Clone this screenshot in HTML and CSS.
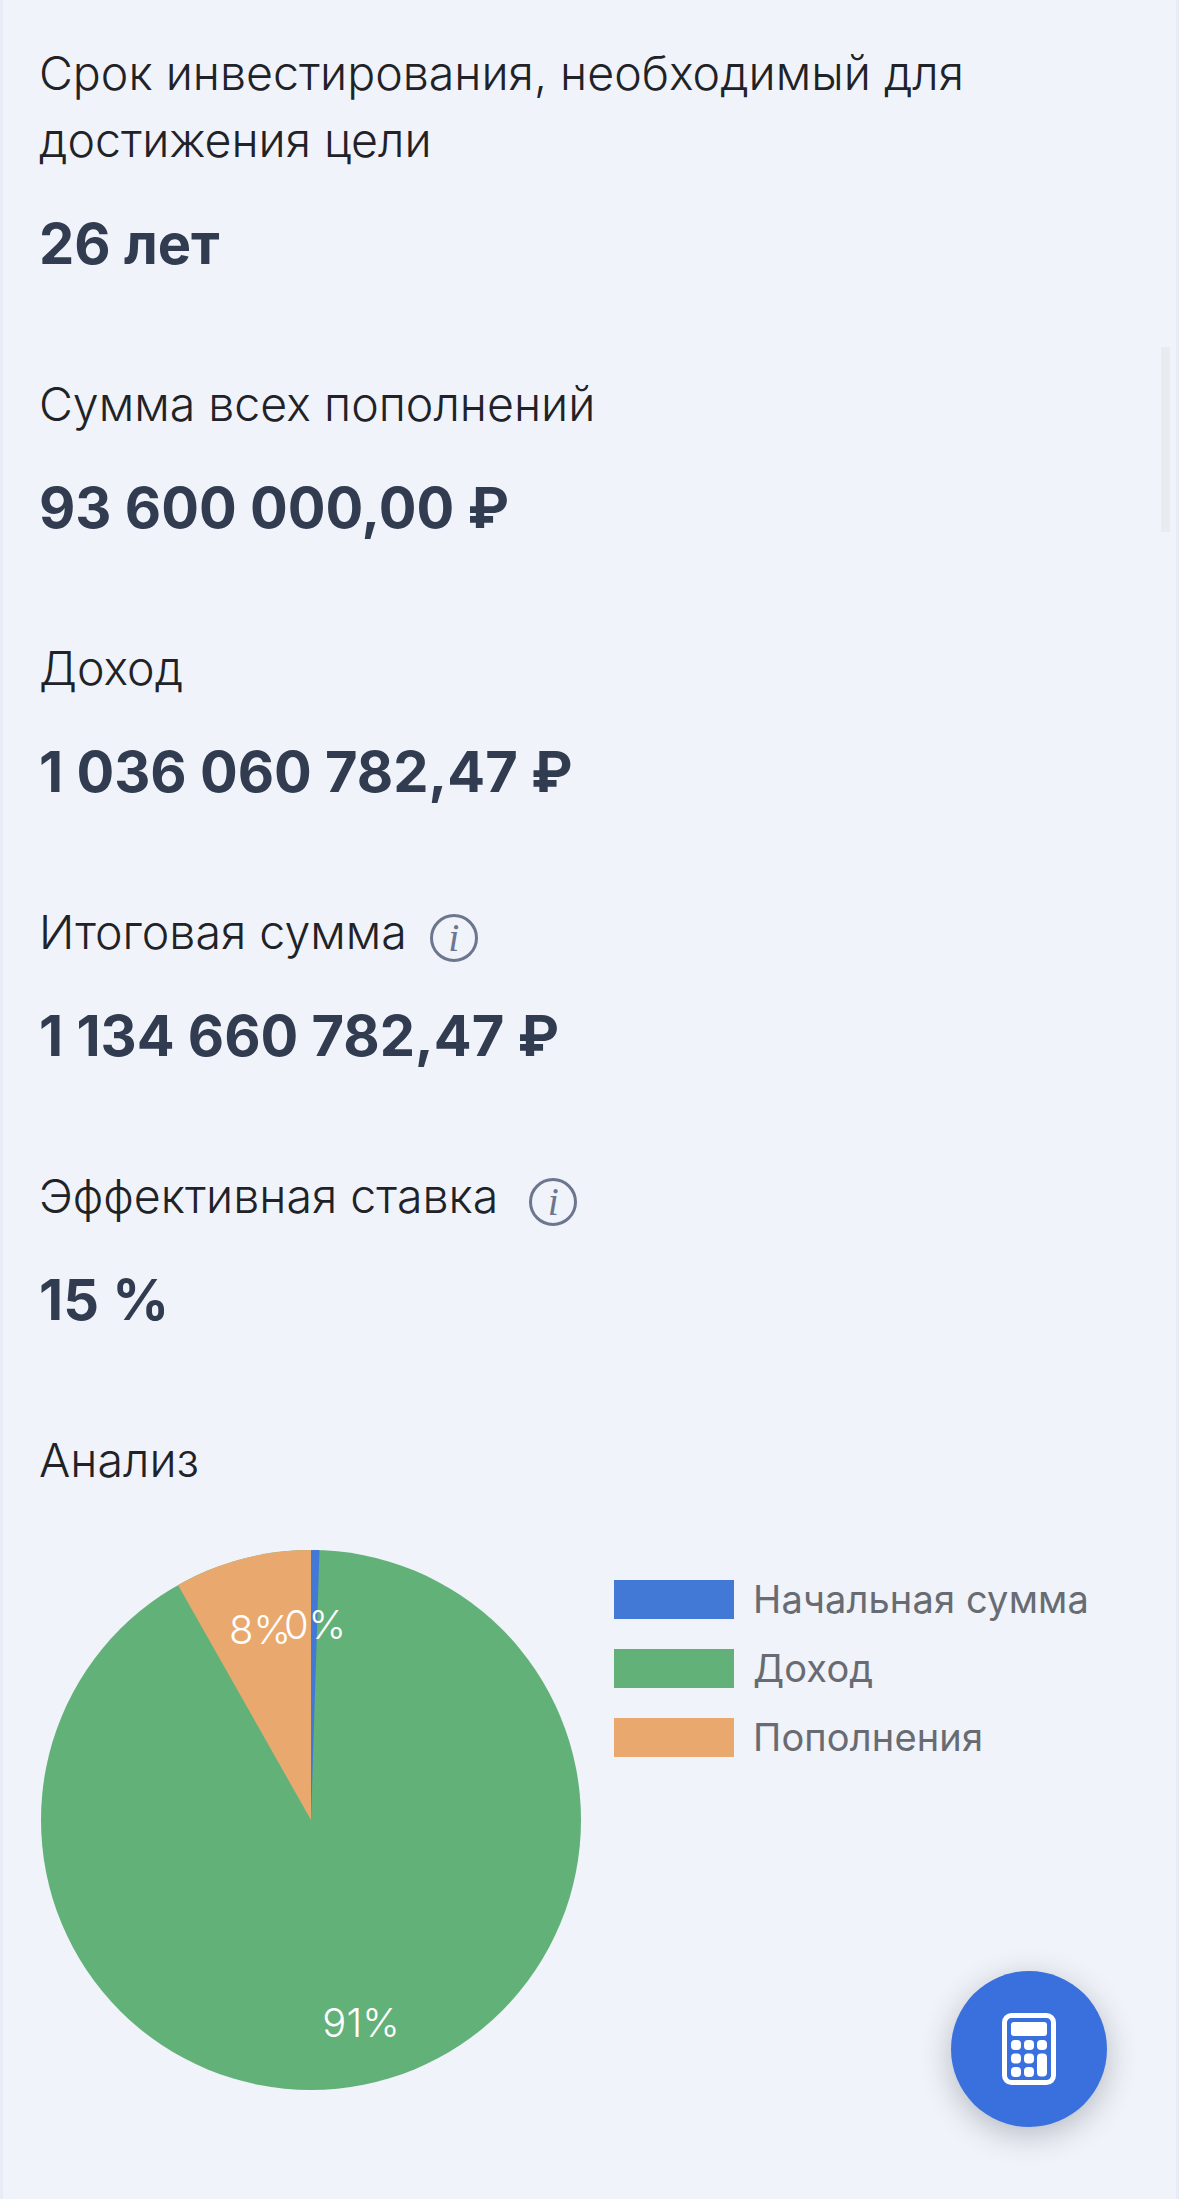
FILE: index.html
```html
<!DOCTYPE html>
<html lang="ru">
<head>
    <meta charset="UTF-8">
    <meta name="viewport" content="width=device-width, initial-scale=1.0">
    <title>Результаты расчёта</title>
    <link rel="stylesheet" href="styles.css">
</head>
<body>
    <div class="container">
        <div class="result-item">
            <div class="result-label">Срок инвестирования, необходимый для достижения цели</div>
            <div class="result-value">26 лет</div>
        </div>
        <div class="result-item">
            <div class="result-label">Сумма всех пополнений</div>
            <div class="result-value">93 600 000,00 ₽</div>
        </div>
        <div class="result-item">
            <div class="result-label">Доход</div>
            <div class="result-value">1 036 060 782,47 ₽</div>
        </div>
        <div class="result-item">
            <div class="result-label">Итоговая сумма <span class="info-icon">i</span></div>
            <div class="result-value">1 134 660 782,47 ₽</div>
        </div>
        <div class="result-item">
            <div class="result-label">Эффективная ставка <span class="info-icon info-icon-wide">i</span></div>
            <div class="result-value">15 %</div>
        </div>

        <!-- Pie chart and legend -->
        <div class="result-label">Анализ</div>
        <div class="chart-row">
            <svg class="pie-chart" width="542" height="542" viewBox="0 0 542 542">
                <circle cx="271" cy="271" r="270" fill="#62b178"/>
                <path d="M271 271 L271 1 A270 270 0 0 1 279.5 1.1 Z" fill="#4379d6"/>
                <path d="M271 271 L271 1 A270 270 0 0 0 138 36 Z" fill="#e9a96e"/>
                <text class="pie-label" x="220" y="95" text-anchor="middle">8%</text>
                <text class="pie-label" x="275" y="90" text-anchor="middle">0%</text>
                <text class="pie-label" x="321" y="488" text-anchor="middle">91%</text>
            </svg>
            <div class="legend">
                <div class="legend-item"><span class="legend-color color-blue"></span><span class="legend-text">Начальная сумма</span></div>
                <div class="legend-item"><span class="legend-color color-green"></span><span class="legend-text">Доход</span></div>
                <div class="legend-item"><span class="legend-color color-orange"></span><span class="legend-text">Пополнения</span></div>
            </div>
        </div>

        <div class="scroll-thumb"></div>
        <button type="button" class="calc-button" aria-label="Калькулятор">
            <svg width="54" height="72" viewBox="0 0 54 72">
                <rect x="2.5" y="2.5" width="49" height="67" rx="7" fill="none" stroke="#fff" stroke-width="5"/>
                <rect x="9" y="9" width="36" height="14" rx="3" fill="#fff"/>
                <rect x="9" y="27" width="10" height="10" rx="4" fill="#fff"/>
                <rect x="22" y="27" width="10" height="10" rx="4" fill="#fff"/>
                <rect x="35" y="27" width="10" height="10" rx="4" fill="#fff"/>
                <rect x="9" y="40.500" width="10" height="10" rx="4" fill="#fff"/>
                <rect x="22" y="40.500" width="10" height="10" rx="4" fill="#fff"/>
                <rect x="35" y="40.500" width="10" height="23" rx="4" fill="#fff"/>
                <rect x="9" y="54" width="10" height="10" rx="4" fill="#fff"/>
                <rect x="22" y="54" width="10" height="10" rx="4" fill="#fff"/>
            </svg>
        </button>
    </div>
</body>
</html>
```
FILE: styles.css
```css
body, html {
    margin: 0;
    padding: 0;
    height: 100%;
}
body {
    background-color: #f0f3f9;
    font-family: "Inter", "Roboto", sans-serif;
    overflow: hidden;
}
.container {
    position: relative;
    box-sizing: border-box;
    height: 2199px;
    padding: 40px 40px 0;
    border-left: 3px solid #e7ecf7;
    border-right: 3px solid #e7ecf7;
}

/* Results list */
.result-item {
    margin-bottom: 89px;
}
.result-label {
    max-width: 1000px;
    margin-left: -4px;
    font-size: 46.500px;
    font-weight: 300;
    line-height: 67px;
    color: #1f2328;
}
.result-value {
    margin-top: 32px;
    margin-left: -4px;
    font-size: 56px;
    font-weight: 700;
    line-height: 76px;
    color: #323c50;
}
.info-icon {
    display: inline-block;
    box-sizing: border-box;
    width: 48px;
    height: 48px;
    margin-left: 10px;
    border: 3px solid #6c768f;
    border-radius: 50%;
    font-family: "Liberation Serif", serif;
    font-size: 40px;
    font-style: italic;
    font-weight: 400;
    line-height: 42px;
    text-align: center;
    color: #6c768f;
    vertical-align: -2px;
}
.info-icon-wide {
    margin-left: 18px;
}

/* Chart */
.chart-row {
    display: flex;
    align-items: flex-start;
    margin-top: 55px;
}
.pie-chart {
    flex: none;
    margin-left: -3px;
}
.pie-label {
    font-family: "Inter", sans-serif;
    font-size: 40px;
    font-weight: 300;
    fill: #fff;
}
.legend {
    margin-left: 32px;
    padding-top: 31px;
}
.legend-item {
    display: flex;
    align-items: center;
    height: 39px;
    margin-bottom: 30px;
    font-size: 38px;
    font-weight: 400;
    letter-spacing: 0.15px;
    color: #686c72;
    white-space: nowrap;
}
.legend-text {
    margin-top: -2px;
    margin-left: -1px;
}
.legend-color {
    width: 120px;
    height: 39px;
    margin-right: 20px;
}
.color-blue {
    background-color: #4379d6;
}
.color-green {
    background-color: #62b178;
}
.color-orange {
    background-color: #e9a96e;
}

/* Overlays */
.scroll-thumb {
    position: absolute;
    top: 347px;
    right: 6px;
    width: 9px;
    height: 185px;
    background-color: #e8ebf0;
}
.calc-button {
    position: absolute;
    top: 1971px;
    left: 948px;
    display: flex;
    align-items: center;
    justify-content: center;
    width: 156px;
    height: 156px;
    padding: 0;
    border: none;
    border-radius: 50%;
    background-color: #3a70de;
    box-shadow: 0 8px 30px rgba(50, 55, 70, 0.3);
    cursor: pointer;
}
```
